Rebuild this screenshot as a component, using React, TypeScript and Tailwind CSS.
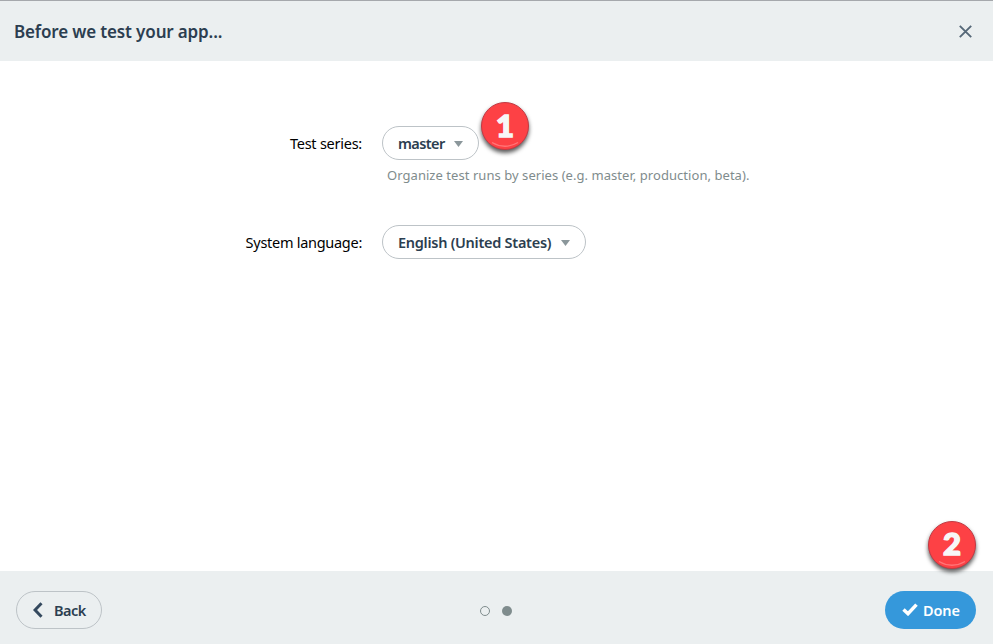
import type { ReactNode } from 'react';

function Caret() {
  return (
    <svg width="9" height="6" viewBox="0 0 9 6" className="relative top-px shrink-0" fill="#8b979b">
      <path d="M0 0h9L4.5 6z" />
    </svg>
  );
}

function Badge({ children, className }: { children: ReactNode; className: string }) {
  return (
    <div
      className={`absolute flex h-12 w-12 items-center justify-center rounded-full border border-[#c23a44] bg-[#fd4145] shadow-[0_3px_4px_rgba(0,0,0,0.65)] ${className}`}
    >
      <span className="pb-0.5 font-['Lato',sans-serif] text-[31px] leading-none font-black text-[#f7f7f7] [-webkit-text-stroke:1.5px_#f7f7f7]">
        {children}
      </span>
      <svg className="absolute bottom-0 left-[9px]" width="28" height="8" viewBox="0 0 28 8" fill="none">
        <path d="M1 1.5Q14 9 27 1.5" stroke="#ff7577" strokeWidth="1.3" />
      </svg>
    </div>
  );
}

export default function App() {
  return (
    <div className="flex h-[644px] w-[993px] flex-col overflow-hidden bg-white font-['Noto_Sans','Open_Sans',sans-serif] text-[#2c3e50]">
      <header className="flex h-[61px] shrink-0 items-center justify-between border-t border-[#a5a8ac] bg-[#ebeff0] pr-[21px] pl-[14px]">
        <h1 className="pt-px text-[17px] font-semibold tracking-[-0.15px] whitespace-nowrap">Before we test your app...</h1>
        <button aria-label="Close">
          <svg width="13" height="13" viewBox="0 0 13 13" fill="none" stroke="#566878" strokeWidth="1.9">
            <path d="M.8.8l11.4 11.4M12.2.8L.8 12.2" />
          </svg>
        </button>
      </header>

      <main className="flex flex-1 flex-col pt-[65px]">
        <div className="flex h-[34px] items-center gap-5">
          <label className="w-[362px] pt-0.5 text-right text-[14.5px] tracking-[-0.25px] whitespace-nowrap text-black">Test series:</label>
          <div className="relative">
            <button className="flex h-[34px] w-[97px] items-center justify-between rounded-full border border-[#bdc3c7] pr-[15px] pl-[15px]">
              <span className="pt-0.5 text-[14.5px] font-semibold tracking-[-0.6px]">master</span>
              <Caret />
            </button>
            <Badge className="-top-6 left-[99px]">1</Badge>
          </div>
        </div>
        <p className="mt-[5px] ml-[387px] text-[13px] leading-5 tracking-[0.05px] whitespace-nowrap text-[#7f8c8d]">
          Organize test runs by series (e.g. master, production, beta).
        </p>
        <div className="mt-10 flex h-[34px] items-center gap-5">
          <label className="w-[362px] pt-0.5 text-right text-[14.5px] tracking-[-0.28px] whitespace-nowrap text-black">System language:</label>
          <button className="flex h-[34px] w-[204px] items-center justify-between rounded-full border border-[#bdc3c7] pr-[15px] pl-[15px]">
            <span className="pt-0.5 text-[14.5px] font-semibold tracking-[-0.27px] whitespace-nowrap">English (United States)</span>
            <Caret />
          </button>
        </div>
      </main>

      <footer className="grid h-[73px] shrink-0 grid-cols-[1fr_auto_1fr] items-center bg-[#ebeff0] pr-[17px] pb-px pl-4 pt-[5px]">
        <button className="flex h-[38px] w-[86px] items-center rounded-full border border-[#bdc3c7] pl-4">
          <svg width="10" height="16" viewBox="0 0 10 16" fill="none" stroke="#34495e" strokeWidth="3">
            <path d="M8.5 1.2L2 8l6.5 6.8" />
          </svg>
          <span className="ml-[11px] pt-[3px] text-[14.5px] font-semibold tracking-[-0.5px]">Back</span>
        </button>
        <div className="flex items-center gap-3 pt-[2px]">
          <span className="h-[10px] w-[10px] rounded-full border border-[#7f8c8d]" />
          <span className="h-[10px] w-[10px] rounded-full bg-[#7f8c8d]" />
        </div>
        <div className="relative justify-self-end">
          <button className="flex h-[38px] w-[91px] items-center rounded-full bg-[#3598db] pl-[17px] text-white">
            <svg width="16" height="13" viewBox="0 0 16 13" fill="none" stroke="white" strokeWidth="3.5">
              <path d="M1.5 6.5L6 10.7 14.5 1.6" />
            </svg>
            <span className="ml-[5px] pt-[3px] text-[14.5px] font-semibold tracking-[-0.1px]">Done</span>
          </button>
          <Badge className="-top-[70px] left-[43px]">2</Badge>
        </div>
      </footer>
    </div>
  );
}
